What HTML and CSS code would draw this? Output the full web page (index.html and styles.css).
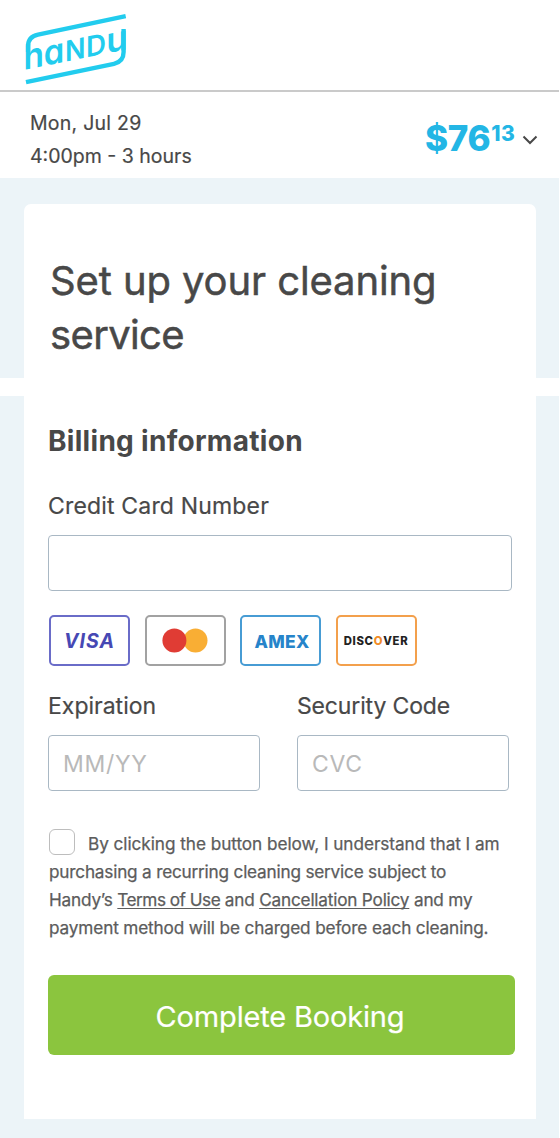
FILE: index.html
```html
<!DOCTYPE html>
<html lang="en">
<head>
<meta charset="utf-8">
<title>Handy – Complete Booking</title>
<link rel="stylesheet" href="styles.css">
</head>
<body>
<div class="page">
  <header class="topbar">
    <svg class="logo" width="104" height="74" viewBox="0 0 104 74" role="img" aria-label="Handy">
      <g fill="none" stroke="#22ccee" stroke-width="4.4">
        <path d="M101.7 4.1 L14 22.7 Q4.1 24.8 4.1 34 L4.1 40"/>
        <path d="M2 70.1 L90 51.8 Q99.6 49.6 99.6 40 L99.6 17"/>
      </g>
      <g class="logo-letters" transform="skewY(-11.4)">
        <text x="-0.4" y="58" textLength="20.5" lengthAdjust="spacingAndGlyphs">h</text>
        <text x="19.8" y="58" textLength="20.5" lengthAdjust="spacingAndGlyphs">ɑ</text>
        <text x="41" y="58" textLength="20.5" lengthAdjust="spacingAndGlyphs" class="cap">N</text>
        <text x="62" y="58" textLength="20" lengthAdjust="spacingAndGlyphs" class="cap">D</text>
        <text x="82.2" y="58" textLength="21.5" lengthAdjust="spacingAndGlyphs">u</text>
      </g>
    </svg>
  </header>
  <section class="summary">
    <div class="when">
      <div class="t-date">Mon, Jul 29</div>
      <div>4:00pm - 3 hours</div>
    </div>
    <div class="price">
      <span class="dollars">$76</span><span class="cents">13</span>
      <svg class="chevron" width="16" height="10" viewBox="0 0 16 10"><path d="M1.5 1.5 L8 8 L14.5 1.5" fill="none" stroke="#484848" stroke-width="2"/></svg>
    </div>
  </section>
  <section class="panel panel-title">
    <h1 class="card title-card">Set up your cleaning <span class="tight">service</span></h1>
  </section>
  <section class="panel panel-form">
    <form class="card form-card">
      <h2>Billing information</h2>
      <label class="label label-number" for="number">Credit Card Number</label>
      <input class="field field-number" id="number" type="text">
      <div class="brands">
        <span class="brand visa">VISA</span>
        <span class="brand mastercard"><svg width="46" height="26" viewBox="0 0 46 26"><circle cx="33.5" cy="12.5" r="12" fill="#f9ae34"/><circle cx="12.4" cy="12.5" r="12" fill="#e03c34"/></svg></span>
        <span class="brand amex">AMEX</span>
        <span class="brand discover">DISC<i>O</i>VER</span>
      </div>
      <div class="pair">
        <div class="cell">
          <label class="label label-exp" for="exp">Expiration</label>
          <input class="field" id="exp" type="text" placeholder="MM/YY">
        </div>
        <div class="cell">
          <label class="label label-code" for="cvc">Security Code</label>
          <input class="field" id="cvc" type="text" placeholder="CVC">
        </div>
      </div>
      <div class="terms">
        <div class="line-1"><span class="checkbox"></span>By clicking the button below, I understand that I am</div>
        <div class="line-2">purchasing a recurring cleaning service subject to</div>
        <div class="line-3">Handy’s <a class="tos">Terms of Use</a> and <a>Cancellation Policy</a> and my</div>
        <div class="line-4">payment method will be charged before each cleaning.</div>
      </div>
      <button class="submit" type="button">Complete Booking</button>
    </form>
  </section>
</div>
</body>
</html>
```
FILE: styles.css
```css
* { box-sizing: border-box; }
body {
  margin: 0;
  background: #fff;
  color: #484848;
  font-family: Inter, "Liberation Sans", sans-serif;
}
.page { width: 559px; height: 1138px; overflow: hidden; display: flex; flex-direction: column; }
.topbar { height: 92px; border-bottom: 2px solid #cacaca; padding: 12px 0 0 24px; flex: none; }
.logo { display: block; }
.logo-letters text { font-family: Inter, "Noto Sans", sans-serif; font-weight: 600; font-size: 35px; fill: #22ccee; }
.logo-letters .cap { font-size: 28.5px; }
.summary { height: 86px; flex: none; display: flex; justify-content: space-between; padding: 15px 21px 0 30px; }
.when { font-size: 19.5px; line-height: 33px; white-space: nowrap; -webkit-text-stroke: 0.2px; }
.t-date { letter-spacing: 0.25px; }
.price { display: flex; align-items: flex-start; color: #23b6e5; font-weight: 800; }
.dollars { font-size: 35px; line-height: 44px; padding-top: 9px; letter-spacing: -0.3px; }
.cents { font-size: 21px; line-height: 26px; padding-top: 14px; margin-left: 1px; letter-spacing: 0.3px; }
.chevron { margin: 28px 0 0 7px; }
.panel { background: #ecf4f8; flex: none; padding: 0 23px 0 24px; }
.card { background: #fff; margin: 0; }
.panel-title { padding-top: 26px; height: 200px; margin-bottom: 18px; }
.title-card { height: 174px; border-radius: 7px 7px 0 0; padding: 50px 27px 0 26px; font-size: 40px; font-weight: 400; line-height: 53.5px; letter-spacing: -0.1px; -webkit-text-stroke: 0.5px; }
.tight { letter-spacing: -0.65px; }
.panel-form { height: 742px; }
.form-card { height: 723px; padding: 26px 21px 0 24px; display: flex; flex-direction: column; }
h2 { margin: 0; font-size: 28px; font-weight: 700; line-height: 38px; letter-spacing: 0.3px; }
.label { display: block; font-size: 23px; line-height: 30px; white-space: nowrap; -webkit-text-stroke: 0.2px; }
.label-number { margin-top: 31px; letter-spacing: 0.17px; }
.label-code { letter-spacing: -0.15px; }
.field { display: block; width: 212px; height: 56px; border: 1.5px solid #a9b8c4; border-radius: 4px; padding: 2px 14px 0; background: #fff; font: 400 23px Inter, "Liberation Sans", sans-serif; letter-spacing: 0.7px; color: #484848; outline: 0; margin-top: 14px; }
.field::placeholder { color: #b9b9b9; opacity: 1; }
.field-number { width: 464px; }
.brands { display: flex; gap: 14.5px; margin: 24px 0 0 1px; }
.brand { width: 81px; height: 51px; border: 2px solid; border-radius: 5px; display: flex; align-items: center; justify-content: center; font-weight: 700; }
.visa { border-color: #6a6cc8; color: #4648b4; font-style: italic; font-size: 19.5px; letter-spacing: 1px; }
.mastercard { border-color: #a2a2a2; }
.amex { border-color: #479cd4; color: #2684ca; font-size: 17.5px; font-weight: 800; letter-spacing: 0.3px; padding: 1px 0 0 3px; }
.discover { border-color: #f3a04c; color: #222; font-size: 11.3px; font-weight: 800; letter-spacing: 0.7px; }
.discover i { font-style: normal; color: #f08c28; }
.pair { display: flex; gap: 37px; margin-top: 25px; }
.terms { margin-top: 39px; padding-left: 1px; font-size: 17.2px; line-height: 28px; color: #5c5c5c; white-space: nowrap; -webkit-text-stroke: 0.25px; }
.line-1 { display: flex; letter-spacing: -0.05px; }
.line-2 { letter-spacing: -0.2px; }
.line-3 { letter-spacing: -0.2px; }
.line-3 .tos { letter-spacing: -0.5px; }
.line-4 { letter-spacing: -0.14px; }
.checkbox { width: 26px; height: 26px; border: 1.5px solid #bdbdbd; border-radius: 6px; margin: -1px 13px 0 0; }
.terms a { text-decoration: underline; text-underline-offset: 2px; text-decoration-skip-ink: none; }
.submit { margin: 33px 0 0; width: 467px; height: 80px; border: 0; border-radius: 6px; background: #8bc53e; color: #fff; font: 400 29px Inter, "Liberation Sans", sans-serif; letter-spacing: -0.17px; padding: 3px 3px 0 0; -webkit-text-stroke: 0.2px; }
```
